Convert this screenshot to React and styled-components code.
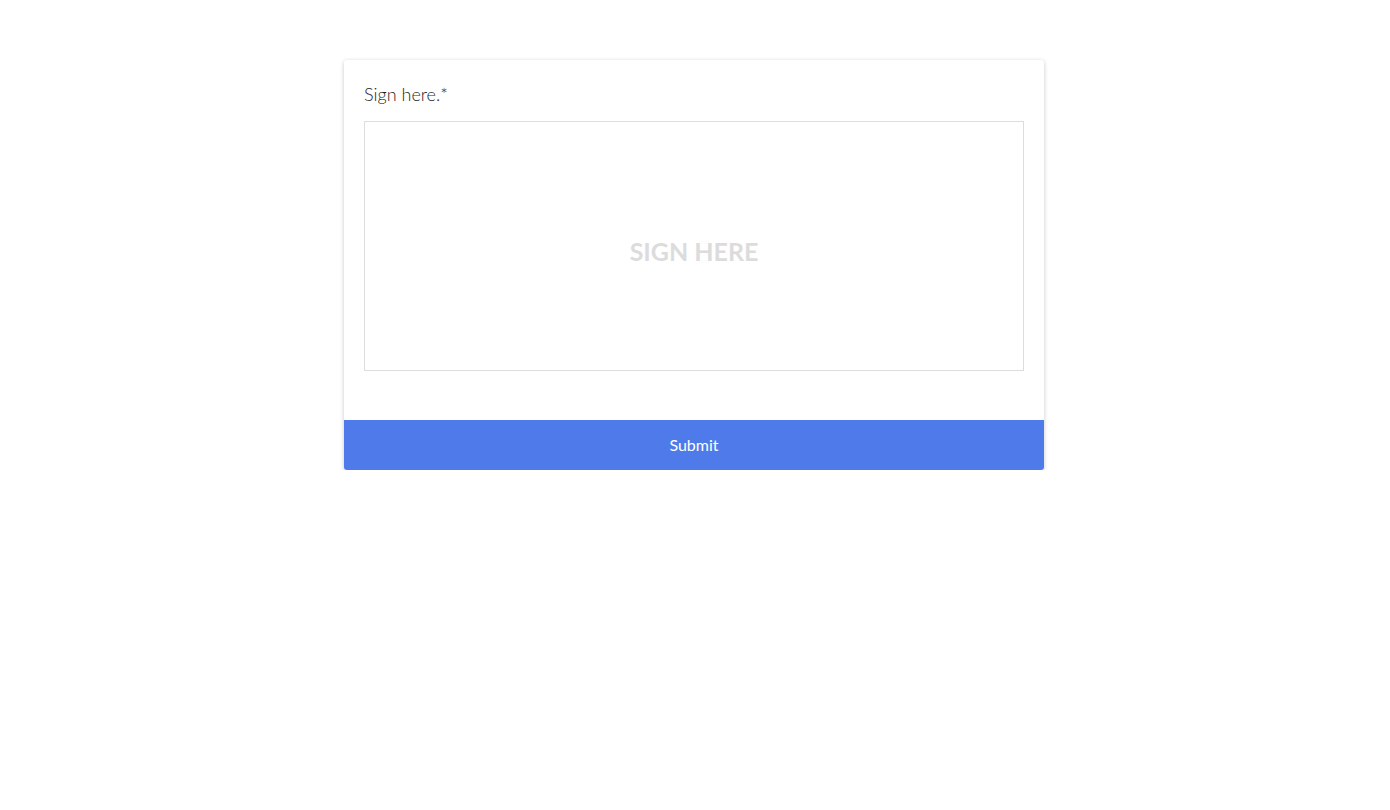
import React from "react";
import styled, { createGlobalStyle } from "styled-components";

const Global = createGlobalStyle`
  html, body { margin: 0; padding: 0; background: #fff; }
  body { font-family: Lato, "Open Sans", sans-serif; }
`;

const Page = styled.div`
  display: flex;
  justify-content: center;
  padding: 60px 2px 0 0;
`;

const Card = styled.form`
  width: 700px;
  background: #fff;
  border-radius: 3px;
  box-shadow: 0 1px 4px rgba(0, 0, 0, 0.22);
  display: flex;
  flex-direction: column;
`;

const Body = styled.div`
  padding: 20px 20px 49px;
  display: flex;
  flex-direction: column;
`;

const Label = styled.label`
  font-family: Lato, sans-serif;
  font-weight: 300;
  font-size: 18px;
  line-height: 28px;
  color: #1f1f1f;
  margin-bottom: 13px;
`;

const Pad = styled.div`
  height: 248px;
  border: 1px solid #ddd;
  display: flex;
  align-items: center;
  justify-content: center;
`;

const Placeholder = styled.span`
  font-family: Lato, sans-serif;
  font-weight: 700;
  font-size: 25px;
  color: #dcdcdc;
  margin-top: 10px;
`;

const Submit = styled.button`
  height: 50px;
  border: none;
  background: #4f7bea;
  color: #fff;
  font-family: Lato, sans-serif;
  font-weight: 400;
  font-size: 16px;
  padding: 0 0 2px;
  border-radius: 0 0 3px 3px;
  cursor: pointer;
`;

export default function App() {
  return (
    <>
      <Global />
      <Page>
        <Card onSubmit={(e) => e.preventDefault()}>
          <Body>
            <Label>Sign here.*</Label>
            <Pad>
              <Placeholder>SIGN HERE</Placeholder>
            </Pad>
          </Body>
          <Submit type="submit">Submit</Submit>
        </Card>
      </Page>
    </>
  );
}
